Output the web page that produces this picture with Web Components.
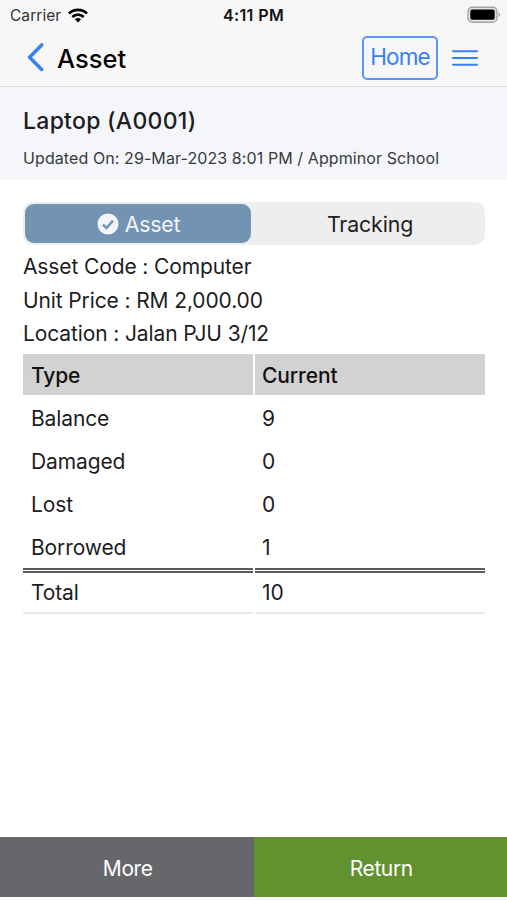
<!DOCTYPE html>
<html lang="en">
<head>
<meta charset="utf-8">
<title>Asset</title>
<style>
  body{
    margin: 0;
    background: #fff;
    color: #1d1d1f;
    font-family: Inter, "Liberation Sans", sans-serif;
    font-size: 21px;
    letter-spacing: -0.12px;
  }
</style>
</head>
<body>
<asset-screen>
  <status-bar slot="top" carrier="Carrier" time="4:11 PM"></status-bar>
  <nav-bar slot="top" heading="Asset" action="Home"></nav-bar>
  <asset-summary slot="top" name="Laptop (A0001)">Updated On: 29-Mar-2023 8:01 PM / Appminor School</asset-summary>

  <segment-control>
    <segment-item active>Asset</segment-item>
    <segment-item>Tracking</segment-item>
  </segment-control>
  <asset-field>Asset Code : Computer</asset-field>
  <asset-field>Unit Price : RM 2,000.00</asset-field>
  <asset-field>Location : Jalan PJU 3/12</asset-field>
  <stock-table>
    <stock-row kind="head" label="Type" value="Current"></stock-row>
    <stock-row label="Balance" value="9"></stock-row>
    <stock-row label="Damaged" value="0"></stock-row>
    <stock-row label="Lost" value="0"></stock-row>
    <stock-row label="Borrowed" value="1"></stock-row>
    <stock-row kind="total" label="Total" value="10"></stock-row>
  </stock-table>

  <footer-button slot="bottom" style="--bg:#66676b">More</footer-button>
  <footer-button slot="bottom" style="--bg:#629130">Return</footer-button>
</asset-screen>

<script>
function define(name, render){
  customElements.define(name, class extends HTMLElement{
    constructor(){
      super();
      this.shadow = this.attachShadow({mode:'open'});
    }

    connectedCallback(){
      this.shadow.innerHTML = render(this);
    }
  });
}

define('asset-screen', () => `
  <slot name='top'></slot>
  <main><slot></slot></main>
  <footer><slot name='bottom'></slot></footer>
  <style>
    :host{
      display: flex;
      flex-direction: column;
      height: 900px;
      box-sizing: border-box;
      padding-bottom: 3px;
      overflow: hidden;
    }

    main{
      flex: 1;
      padding: 22px 22px 0 23px;
    }

    footer{
      display: flex;
      height: 60px;
    }
  </style>
`);

define('status-bar', el => `
  <div class='carrier'>
    <span>${el.getAttribute('carrier')}</span>
    <svg width='20' height='15' viewBox='0 0 20 15' fill='none' stroke='#000' stroke-width='2.7'>
      <path d='M1 5.5C6 .7 14 .7 19 5.5'/>
      <path d='M4.3 9C7.6 5.9 12.4 5.9 15.7 9'/>
      <path d='M10 14.4 6.9 11.3Q10 8.8 13.1 11.3Z' fill='#000' stroke='none'/>
    </svg>
  </div>
  <b>${el.getAttribute('time')}</b>
  <svg class='battery' width='34' height='18' viewBox='0 0 34 18'>
    <rect x='1' y='1.2' width='29' height='15' rx='4.3' fill='#e4e4e4' stroke='#a5a5a5' stroke-width='1.4'/>
    <rect x='3.3' y='3.6' width='24.4' height='10.2' rx='1.8'/>
    <path d='M31.6 6.6Q33.2 7.4 33.2 8.8T31.6 11Z' fill='#a5a5a5'/>
  </svg>
  <style>
    :host{
      display: grid;
      grid-template-columns: 1fr auto 1fr;
      align-items: center;
      height: 30px;
      padding: 0 7px 0 10px;
      background: #f7f7f7;
      font-size: 15.5px;
      letter-spacing: 0.05px;
      color: #333;
    }

    .carrier{
      display: flex;
      align-items: center;
      gap: 7px;
    }

    b{
      margin-right: 3px;
      color: #111;
      font-size: 16px;
      font-weight: 600;
      letter-spacing: 0.4px;
    }

    .battery{
      justify-self: end;
      margin: -1px -1px 0 0;
    }
  </style>
`);

define('nav-bar', el => `
  <svg width='18' height='30' viewBox='0 0 18 30' fill='none' stroke='#3880f6' stroke-width='3.5' stroke-linecap='round' stroke-linejoin='round'>
    <path d='M15.7 1.9 3.6 14.2 15.7 26.5'/>
  </svg>
  <h1>${el.getAttribute('heading')}</h1>
  <button><span>${el.getAttribute('action')}</span></button>
  <svg width='26' height='18' viewBox='0 0 26 18' stroke='#3880f6' stroke-width='2' stroke-linecap='round'>
    <path d='M1 2.2H25M1 9H25M1 15.8H25'/>
  </svg>
  <style>
    :host{
      display: flex;
      align-items: center;
      height: 56px;
      padding: 0 29px 0 26px;
      border-bottom: 1px solid #d9dadc;
      background: #f7f7f7;
    }

    h1{
      flex: 1;
      margin: 1px 0 0 13px;
      color: #050505;
      font-size: 25.5px;
      font-weight: 500;
      letter-spacing: 0;
    }

    button{
      width: 76px;
      height: 44px;
      margin: -1px 14px 0 0;
      padding: 0 0 2px;
      border: 2px solid #5b97f8;
      border-radius: 5px;
      background: none;
      color: #3880f6;
      font: inherit;
      font-size: 22.5px;
      letter-spacing: -0.9px;
    }
  </style>
`);

define('asset-summary', el => `
  <h2>${el.getAttribute('name')}</h2>
  <p><slot></slot></p>
  <style>
    :host{
      display: block;
      height: 93px;
      box-sizing: border-box;
      padding: 18px 23px 0;
      background: #f4f6fa;
    }

    h2{
      margin: 0;
      font-size: 23px;
      font-weight: 500;
      letter-spacing: 0.28px;
      line-height: 32px;
    }

    p{
      margin: 11px 0 0;
      color: #3a3a3d;
      font-size: 16px;
      letter-spacing: 0.09px;
      line-height: 20px;
      white-space: nowrap;
    }
  </style>
`);

define('segment-control', () => `
  <slot></slot>
  <style>
    :host{
      display: flex;
      height: 43px;
      box-sizing: border-box;
      margin-bottom: 5px;
      padding: 2px;
      border-radius: 10px;
      background: #eee;
    }
  </style>
`);

define('segment-item', el => `
  ${el.hasAttribute('active') && `<svg width='22' height='22' viewBox='0 0 22 22'>
    <circle cx='11' cy='11' r='10.5' fill='#f2f6fa'/>
    <path d='M6 11.7 9.4 15 16 7.6' fill='none' stroke='#7393b2' stroke-width='2.5'/>
  </svg>` || ''}
  <slot></slot>
  <style>
    :host{
      display: flex;
      flex: 1;
      align-items: center;
      justify-content: center;
      gap: 6px;
      padding-left: 6px;
      border-radius: 9px;
      font-size: 21.3px;
    }

    :host([active]){
      flex: 0 0 226px;
      box-sizing: border-box;
      padding-left: 1px;
      background: #7393b2;
      color: #f2f6fa;
      letter-spacing: -0.25px;
    }
  </style>
`);

define('asset-field', () => `
  <slot></slot>
  <style>
    :host{
      display: block;
      line-height: 33.6px;
      white-space: nowrap;
    }
  </style>
`);

define('stock-table', () => `
  <slot></slot>
  <style>
    :host{
      display: flex;
      flex-direction: column;
      margin-top: 3px;
    }
  </style>
`);

define('stock-row', el => `
  <div>${el.getAttribute('label')}</div>
  <div>${el.getAttribute('value')}</div>
  <style>
    :host{
      display: grid;
      grid-template-columns: 230px 1fr;
      column-gap: 2px;
      height: 43.2px;
    }

    div{
      display: flex;
      align-items: center;
      padding: 4px 8px 0;
    }

    div + div{
      padding-left: 7px;
    }

    :host([kind='head']){
      height: 41px;
      font-weight: 500;
      color: #111;
    }

    :host([kind='head']) div{
      padding-top: 2px;
      background: #d2d2d2;
    }

    :host([kind='total']){
      height: 46px;
      margin-top: 0.2px;
    }

    :host([kind='total']) div{
      padding-top: 1px;
      border-top: 5px double #5c5c5c;
      border-bottom: 2px solid #e9e9e9;
    }
  </style>
`);

define('footer-button', () => `
  <slot></slot>
  <style>
    :host{
      display: flex;
      flex: 1;
      align-items: center;
      justify-content: center;
      padding: 2px 0 0 2px;
      background: var(--bg);
      color: #fff;
      letter-spacing: -0.4px;
    }
  </style>
`);
</script>
</body>
</html>
